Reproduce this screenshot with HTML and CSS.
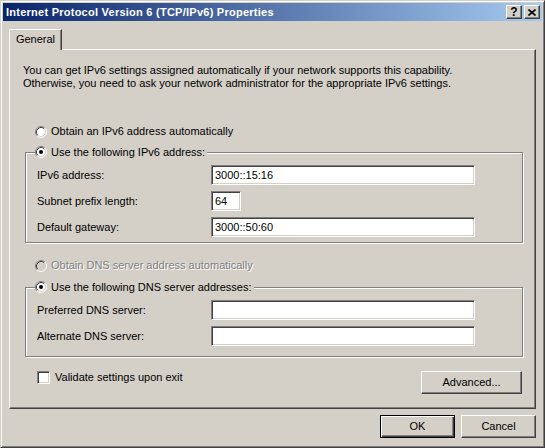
FILE: index.html
```html
<!DOCTYPE html>
<html>
<head>
<meta charset="utf-8">
<title>Internet Protocol Version 6 (TCP/IPv6) Properties</title>
<link rel="stylesheet" href="styles.css">
</head>
<body>
<div class="window">
  <div class="titlebar">
    <span class="title">Internet Protocol Version 6 (TCP/IPv6) Properties</span>
    <div class="caption-btns">
      <span class="cbtn help">?</span>
      <span class="cbtn close"><svg width="8" height="7" viewBox="0 0 8 7"><path d="M0.5 0.5 L7.5 6.5 M7.5 0.5 L0.5 6.5" stroke="#000" stroke-width="1.6" fill="none"/></svg></span>
    </div>
  </div>
  <div class="client">
    <div class="tabs"><div class="tab">General</div></div>
    <div class="panel">
      <p class="intro">You can get IPv6 settings assigned automatically if your network supports this capability.<br>Otherwise, you need to ask your network administrator for the appropriate IPv6 settings.</p>

      <div class="opt first">
        <svg class="radio" width="12" height="12" viewBox="0 0 12 12"><circle cx="6" cy="6" r="5" fill="#fff"/><path d="M2.11 9.89 A5.5 5.5 0 0 1 9.89 2.11" stroke="#808080" fill="none"/><path d="M9.89 2.11 A5.5 5.5 0 0 1 2.11 9.89" stroke="#fff" fill="none"/><path d="M2.82 9.18 A4.5 4.5 0 0 1 9.18 2.82" stroke="#404040" fill="none"/><path d="M9.18 2.82 A4.5 4.5 0 0 1 2.82 9.18" stroke="#d4d0c8" fill="none"/></svg>
        <span>Obtain an IPv6 address automatically</span>
      </div>

      <fieldset class="group g1">
        <legend class="opt">
          <svg class="radio" width="12" height="12" viewBox="0 0 12 12"><circle cx="6" cy="6" r="5" fill="#fff"/><path d="M2.11 9.89 A5.5 5.5 0 0 1 9.89 2.11" stroke="#808080" fill="none"/><path d="M9.89 2.11 A5.5 5.5 0 0 1 2.11 9.89" stroke="#fff" fill="none"/><path d="M2.82 9.18 A4.5 4.5 0 0 1 9.18 2.82" stroke="#404040" fill="none"/><path d="M9.18 2.82 A4.5 4.5 0 0 1 2.82 9.18" stroke="#d4d0c8" fill="none"/><circle cx="6" cy="6" r="2" fill="#000"/></svg>
          <span>Use the following IPv6 address:</span>
        </legend>
        <div class="rows">
          <div class="row"><span class="lbl">IPv6 address:</span><span class="edit wide">3000::15:16</span></div>
          <div class="row"><span class="lbl">Subnet prefix length:</span><span class="edit narrow">64</span></div>
          <div class="row"><span class="lbl">Default gateway:</span><span class="edit wide">3000::50:60</span></div>
        </div>
      </fieldset>

      <div class="opt disabled">
        <svg class="radio" width="12" height="12" viewBox="0 0 12 12"><circle cx="6" cy="6" r="5" fill="#d4d0c8"/><path d="M2.11 9.89 A5.5 5.5 0 0 1 9.89 2.11" stroke="#808080" fill="none"/><path d="M9.89 2.11 A5.5 5.5 0 0 1 2.11 9.89" stroke="#fff" fill="none"/><path d="M2.82 9.18 A4.5 4.5 0 0 1 9.18 2.82" stroke="#404040" fill="none"/><path d="M9.18 2.82 A4.5 4.5 0 0 1 2.82 9.18" stroke="#d4d0c8" fill="none"/></svg>
        <span>Obtain DNS server address automatically</span>
      </div>

      <fieldset class="group g2">
        <legend class="opt">
          <svg class="radio" width="12" height="12" viewBox="0 0 12 12"><circle cx="6" cy="6" r="5" fill="#fff"/><path d="M2.11 9.89 A5.5 5.5 0 0 1 9.89 2.11" stroke="#808080" fill="none"/><path d="M9.89 2.11 A5.5 5.5 0 0 1 2.11 9.89" stroke="#fff" fill="none"/><path d="M2.82 9.18 A4.5 4.5 0 0 1 9.18 2.82" stroke="#404040" fill="none"/><path d="M9.18 2.82 A4.5 4.5 0 0 1 2.82 9.18" stroke="#d4d0c8" fill="none"/><circle cx="6" cy="6" r="2" fill="#000"/></svg>
          <span>Use the following DNS server addresses:</span>
        </legend>
        <div class="rows">
          <div class="row"><span class="lbl">Preferred DNS server:</span><span class="edit wide"></span></div>
          <div class="row"><span class="lbl">Alternate DNS server:</span><span class="edit wide"></span></div>
        </div>
      </fieldset>

      <div class="bottom-row">
        <div class="check"><span class="checkbox"></span><span>Validate settings upon exit</span></div>
        <span class="btn adv">Advanced...</span>
      </div>
    </div>
    <div class="dialog-buttons">
      <span class="btn default">OK</span>
      <span class="btn">Cancel</span>
    </div>
  </div>
</div>
</body>
</html>
```

FILE: styles.css
```css
* { box-sizing: border-box; }
html, body { margin: 0; padding: 0; }
body {
  font-family: "Liberation Sans", Arial, sans-serif;
  font-size: 11px;
  line-height: 13px;
  color: #000;
  background: #d4d0c8;
}
.window {
  width: 545px;
  height: 448px;
  background: #d4d0c8;
  border: 1px solid;
  border-color: #d4d0c8 #404040 #404040 #d4d0c8;
  box-shadow: inset 1px 1px 0 #fff, inset -1px -1px 0 #808080;
  padding: 2px;
  display: flex;
  flex-direction: column;
}
.titlebar {
  height: 18px;
  background: linear-gradient(to right, #0a246a, #a6caf0);
  display: flex;
  align-items: center;
  padding: 0 2px 0 3px;
}
.title {
  flex: 1;
  color: #fff;
  font-weight: bold;
  font-size: 11px;
  letter-spacing: 0.25px;
  white-space: nowrap;
}
.caption-btns { display: flex; gap: 2px; }
.cbtn {
  width: 16px;
  height: 14px;
  background: #d4d0c8;
  border: 1px solid;
  border-color: #fff #404040 #404040 #fff;
  box-shadow: inset -1px -1px 0 #808080;
  display: flex;
  align-items: center;
  justify-content: center;
  font-weight: bold;
  font-size: 12px;
  line-height: 12px;
}
.client {
  flex: 1;
  display: flex;
  flex-direction: column;
}
.tabs {
  margin-top: 8px;
  padding-left: 6px;
  display: flex;
}
.tab {
  position: relative;
  z-index: 1;
  width: 53px;
  height: 21px;
  margin-bottom: -1px;
  background: #d4d0c8;
  border-top: 1px solid #fff;
  border-left: 1px solid #fff;
  border-right: 1px solid #404040;
  box-shadow: inset -1px 0 0 #808080;
  border-top-left-radius: 2px;
  display: flex;
  align-items: center;
  justify-content: center;
  padding-bottom: 1px;
}
.panel {
  margin: 0 6px;
  height: 360px;
  border: 1px solid;
  border-color: #fff #404040 #404040 #fff;
  box-shadow: inset -1px -1px 0 #808080;
  display: flex;
  flex-direction: column;
}
.intro {
  margin: 14px 0 0 13px;
  white-space: nowrap;
}
.opt {
  display: flex;
  align-items: center;
  gap: 4px;
  height: 13px;
  white-space: nowrap;
}
.opt .radio { flex: none; }
.opt.first { margin: 35px 0 0 25px; }
.opt.disabled { margin: 16px 0 0 25px; color: #808080; text-shadow: 1px 1px 0 #fff; }
.group {
  margin: 7px 12px 0 15px;
  padding: 0;
  border: 1px solid #808080;
  box-shadow: inset 1px 1px 0 #fff, 1px 1px 0 #fff;
}
.group legend {
  margin-left: 9px;
  padding: 0 2px 0 0;
  background: #d4d0c8;
  height: 14px;
}
.group.g2 { margin-top: 8px; }
.rows {
  padding: 6px 0 5px 11px;
  display: flex;
  flex-direction: column;
  gap: 6px;
}
.g2 .rows { padding-top: 6px; padding-bottom: 10px; }
.row {
  display: flex;
  align-items: center;
  height: 20px;
}
.lbl { width: 174px; flex: none; }
.edit {
  height: 20px;
  background: #fff;
  border: 1px solid;
  border-color: #808080 #fff #fff #808080;
  box-shadow: inset 1px 1px 0 #404040, inset -1px -1px 0 #d4d0c8;
  padding: 0 3px;
  display: flex;
  align-items: center;
  white-space: nowrap;
}
.edit.wide { width: 264px; }
.edit.narrow { width: 30px; }
.bottom-row {
  margin: 14px 13px 0 27px;
  display: flex;
  align-items: flex-start;
  justify-content: space-between;
}
.check {
  display: flex;
  align-items: center;
  gap: 5px;
  height: 13px;
}
.checkbox {
  width: 13px;
  height: 13px;
  background: #fff;
  border: 1px solid;
  border-color: #808080 #fff #fff #808080;
  box-shadow: inset 1px 1px 0 #404040, inset -1px -1px 0 #d4d0c8;
}
.btn {
  height: 23px;
  width: 75px;
  background: #d4d0c8;
  border: 1px solid;
  border-color: #fff #404040 #404040 #fff;
  box-shadow: inset -1px -1px 0 #808080;
  display: flex;
  align-items: center;
  justify-content: center;
}
.btn.adv { width: 101px; }
.btn.default {
  border-color: #000;
  box-shadow: inset 1px 1px 0 #fff, inset -1px -1px 0 #404040, inset -2px -2px 0 #808080;
}
.dialog-buttons {
  margin-top: 6px;
  padding-right: 6px;
  display: flex;
  justify-content: flex-end;
  gap: 6px;
}
```
